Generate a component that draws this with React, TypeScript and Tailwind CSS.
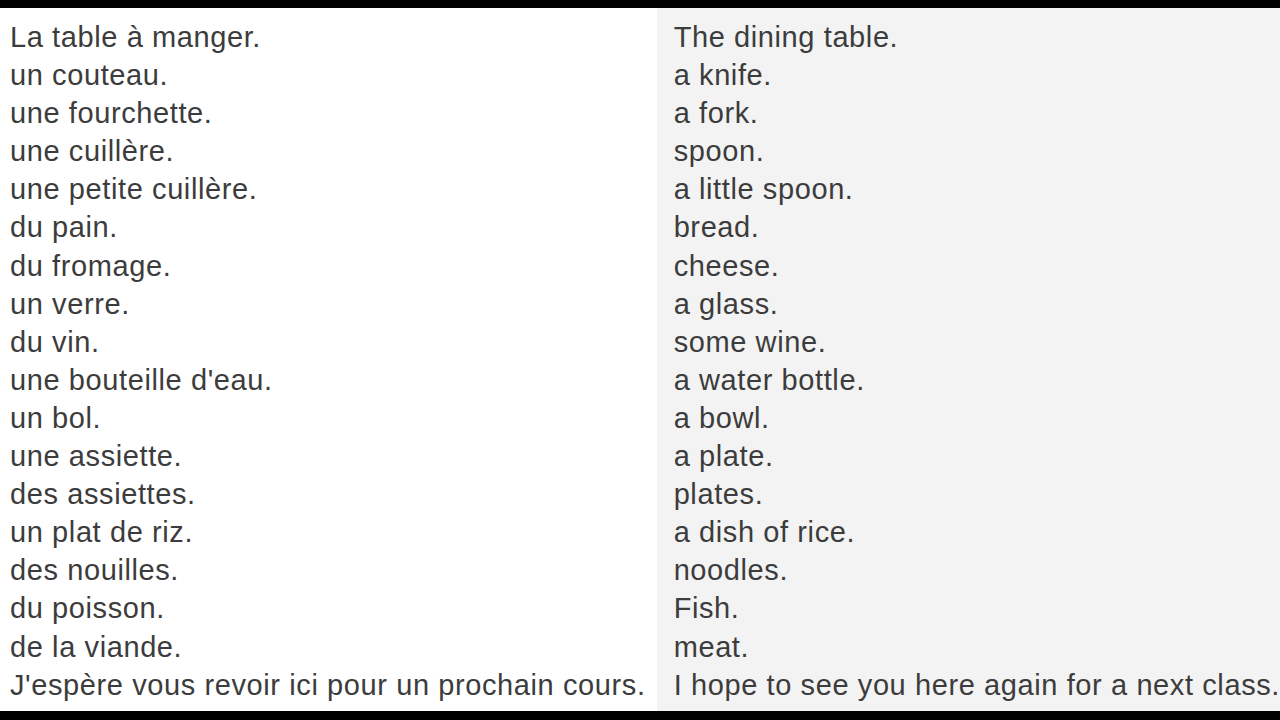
const ROWS: [string, string][] = [
  ["La table à manger.", "The dining table."],
  ["un couteau.", "a knife."],
  ["une fourchette.", "a fork."],
  ["une cuillère.", "spoon."],
  ["une petite cuillère.", "a little spoon."],
  ["du pain.", "bread."],
  ["du fromage.", "cheese."],
  ["un verre.", "a glass."],
  ["du vin.", "some wine."],
  ["une bouteille d'eau.", "a water bottle."],
  ["un bol.", "a bowl."],
  ["une assiette.", "a plate."],
  ["des assiettes.", "plates."],
  ["un plat de riz.", "a dish of rice."],
  ["des nouilles.", "noodles."],
  ["du poisson.", "Fish."],
  ["de la viande.", "meat."],
  ["J'espère vous revoir ici pour un prochain cours.", "I hope to see you here again for a next class."],
];

export default function App() {
  return (
    <div className="w-[1280px] h-[720px] bg-black flex flex-col overflow-hidden" style={{ fontFamily: '"Liberation Sans", Arial, sans-serif' }}>
      <div className="h-[8px] shrink-0" />
      <div className="flex-1 flex bg-white text-[29px] leading-[38.1px] text-[#3c3c3c] tracking-[0.6px]">
        <div className="w-[657px] pl-[10px] pt-[10px]">
          {ROWS.map(([fr]) => <div key={fr} className="whitespace-nowrap">{fr}</div>)}
        </div>
        <div className="flex-1 bg-[#f3f3f3] pl-[17px] pt-[10px]">
          {ROWS.map(([, en]) => <div key={en} className="whitespace-nowrap">{en}</div>)}
        </div>
      </div>
      <div className="h-[9px] shrink-0" />
    </div>
  );
}
